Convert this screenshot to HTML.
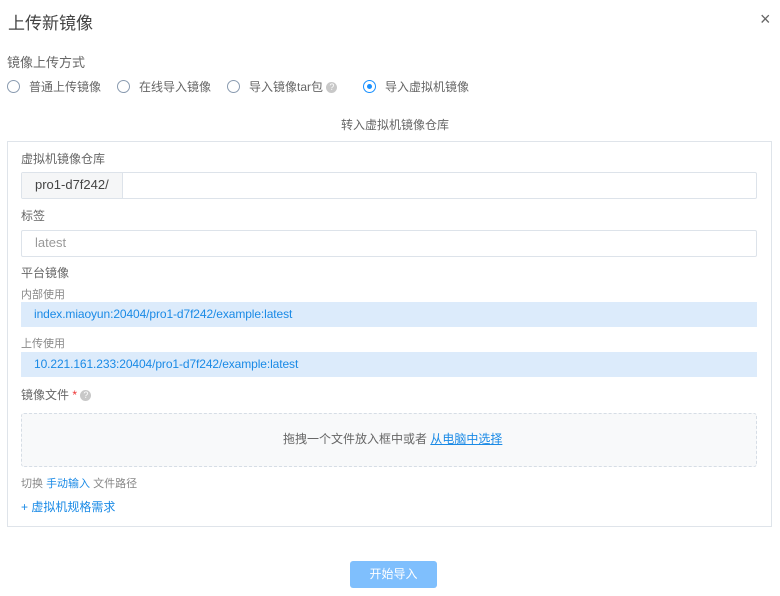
<!DOCTYPE html>
<html><head><meta charset="utf-8"><style>
*{box-sizing:border-box;margin:0;padding:0}
body{width:780px;height:596px;background:#fff;font-family:"Liberation Sans","Noto Sans CJK SC",sans-serif;color:#555;position:relative;overflow:hidden}
.a{position:absolute;white-space:nowrap}
.radio{position:absolute;width:13px;height:13px;border:1px solid #8a9bb0;border-radius:50%}
.radio.on{border-color:#1890ff}
.radio.on::after{content:"";position:absolute;left:3px;top:3px;width:5px;height:5px;border-radius:50%;background:#1890ff}
.q{display:inline-block;width:11px;height:11px;border-radius:50%;background:#c8c8c8;color:#fff;font-size:9px;line-height:11px;text-align:center;vertical-align:middle}
.box{position:absolute;left:21px;width:736px;border:1px solid #dde3ea;border-radius:2px}
.blue{position:absolute;left:21px;width:736px;height:25px;background:#dcebfb;color:#1a8ae6;font-size:12px;line-height:25px;padding-left:13px;letter-spacing:-0.1px}
</style></head><body>
<div class="a" style="left:8px;top:9px;font-size:17px;color:#444">上传新镜像</div>
<div class="a" style="left:760px;top:9px;font-size:18px;color:#666">×</div>
<div class="a" style="left:7px;top:52px;font-size:13px;color:#666">镜像上传方式</div>
<div class="radio" style="left:7px;top:80px"></div><div class="a" style="left:29px;top:78px;font-size:12px;color:#666">普通上传镜像</div>
<div class="radio" style="left:117px;top:80px"></div><div class="a" style="left:139px;top:78px;font-size:12px;color:#666">在线导入镜像</div>
<div class="radio" style="left:227px;top:80px"></div><div class="a" style="left:249px;top:78px;font-size:12px;color:#666">导入镜像tar包 <span class="q">?</span></div>
<div class="radio on" style="left:363px;top:80px"></div><div class="a" style="left:385px;top:78px;font-size:12px;color:#666">导入虚拟机镜像</div>
<div class="a" style="left:341px;top:116px;font-size:12px;color:#666">转入虚拟机镜像仓库</div>
<div style="position:absolute;left:7px;top:141px;width:765px;height:386px;border:1px solid #dfe4ea"></div>
<div class="a" style="left:21px;top:150px;font-size:12px;color:#666">虚拟机镜像仓库</div>
<div class="box" style="top:172px;height:27px"><div style="position:absolute;left:0;top:0;width:101px;height:25px;background:#f5f6f7;border-right:1px solid #dde3ea;font-size:13px;color:#444;line-height:24px;padding-left:13px">pro1-d7f242/</div></div>
<div class="a" style="left:21px;top:207px;font-size:12px;color:#666">标签</div>
<div class="box" style="top:230px;height:27px;font-size:13px;color:#999;line-height:24px;padding-left:13px">latest</div>
<div class="a" style="left:21px;top:264px;font-size:12px;color:#666">平台镜像</div>
<div class="a" style="left:21px;top:286px;font-size:11px;color:#888">内部使用</div>
<div class="blue" style="top:302px">index.miaoyun:20404/pro1-d7f242/example:latest</div>
<div class="a" style="left:21px;top:335px;font-size:11px;color:#888">上传使用</div>
<div class="blue" style="top:352px">10.221.161.233:20404/pro1-d7f242/example:latest</div>
<div class="a" style="left:21px;top:386px;font-size:12px;color:#666">镜像文件 <span style="color:#e33">*</span> <span class="q">?</span></div>
<div style="position:absolute;left:21px;top:413px;width:736px;height:54px;border:1px dashed #d6dde5;background:#f8f9fa;border-radius:3px"></div>
<div class="a" style="left:283px;top:430px;font-size:12px;color:#666">拖拽一个文件放入框中或者 <span style="color:#1a8ae6;text-decoration:underline">从电脑中选择</span></div>
<div class="a" style="left:21px;top:475px;font-size:11px;color:#888">切换 <span style="color:#1a8ae6">手动输入</span> 文件路径</div>
<div class="a" style="left:21px;top:498px;font-size:12px;color:#1a8ae6">+ 虚拟机规格需求</div>
<div style="position:absolute;left:350px;top:561px;width:87px;height:27px;background:#7fbffd;border-radius:3px;color:#fff;font-size:12px;text-align:center;line-height:26px">开始导入</div>
</body></html>
